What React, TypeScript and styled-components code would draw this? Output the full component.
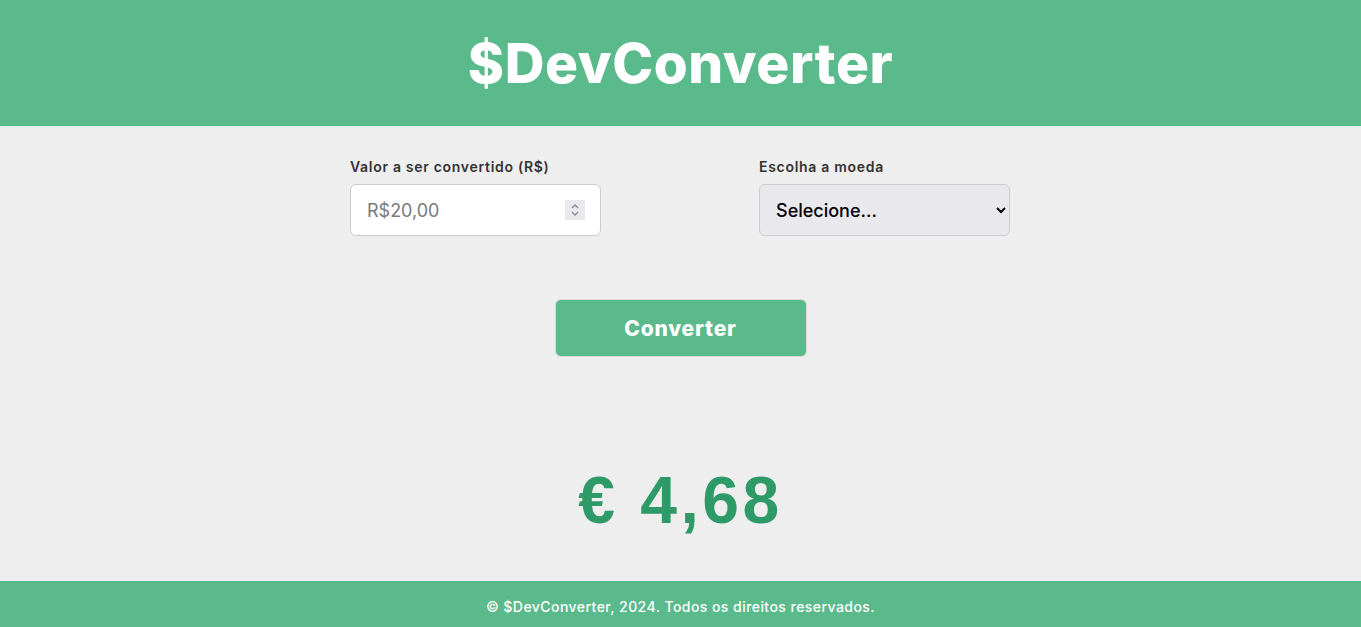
import React from "react";
import styled, { createGlobalStyle } from "styled-components";

const Global = createGlobalStyle`
  html, body { margin: 0; padding: 0; }
  body { background: #eeeeee; font-family: "Inter", "Noto Sans", sans-serif; }
  * { box-sizing: border-box; }
`;

const Page = styled.div`
  min-height: 100vh;
  display: flex;
  flex-direction: column;
`;

const Header = styled.header`
  height: 126px;
  background: #5bba8c;
  display: flex;
  align-items: center;
  justify-content: center;
`;

const Title = styled.h1`
  margin: 0;
  color: #ffffff;
  font-family: "Inter", sans-serif;
  font-weight: 800;
  font-size: 55px;
  letter-spacing: 0.6px;
`;

const Main = styled.main`
  flex: 1;
  display: flex;
  flex-direction: column;
  align-items: center;
  padding-top: 32px;
`;

const FormRow = styled.div`
  display: flex;
  gap: 158px;
  margin-right: 1px;
`;

const Field = styled.div`
  display: flex;
  flex-direction: column;
  width: 251px;
`;

const Label = styled.label`
  font-size: 14px;
  font-weight: 600;
  color: #333333;
  margin-bottom: 8px;
  line-height: 18px;
  letter-spacing: 0.7px;
`;

const Control = styled.div`
  position: relative;
  height: 52px;
`;

const TextInput = styled.input`
  width: 100%;
  height: 52px;
  border: 1px solid #cccccc;
  border-radius: 6px;
  background: #ffffff;
  padding: 0 16px;
  font-family: "Inter", sans-serif;
  font-size: 18px;
  color: #333;
  outline: none;
  &::placeholder { color: #7a7a7a; }
`;

const Spinner = styled.div`
  position: absolute;
  right: 16px;
  top: 16px;
  width: 20px;
  height: 20px;
  background: #e9e9ed;
  display: flex;
  align-items: center;
  justify-content: center;
`;

const Select = styled.select`
  width: 100%;
  height: 52px;
  border: 1px solid #cccccc;
  border-radius: 6px;
  background: #e9e9ed;
  padding: 0 12px;
  font-family: "Inter", sans-serif;
  font-size: 18px;
  font-weight: 500;
  color: #000;
`;

const Button = styled.button`
  margin-top: 63px;
  width: 252px;
  height: 58px;
  background: #5bba8c;
  border: 1px solid #d8d8d8;
  border-radius: 6px;
  color: #ffffff;
  font-family: "Inter", sans-serif;
  font-weight: 800;
  font-size: 21px;
  letter-spacing: 0.8px;
  cursor: pointer;
`;

const Result = styled.div`
  margin-top: 110px;
  font-family: "Liberation Sans", Arial, sans-serif;
  font-weight: 700;
  font-size: 66px;
  letter-spacing: 3.5px;
  color: #2e9a68;
  line-height: 1;
`;

const Footer = styled.footer`
  height: 46px;
  background: #5bba8c;
  display: flex;
  align-items: center;
  justify-content: center;
  color: #ffffff;
  font-size: 14px;
  font-weight: 500;
  letter-spacing: 0.45px;
  padding-top: 4px;
`;

export default function App() {
  return (
    <Page>
      <Global />
      <Header>
        <Title>$DevConverter</Title>
      </Header>
      <Main>
        <FormRow>
          <Field>
            <Label>Valor a ser convertido (R$)</Label>
            <Control>
              <TextInput type="text" placeholder="R$20,00" />
              <Spinner>
                <svg width="10" height="16" viewBox="0 0 10 16" fill="none" stroke="#8a8a8a" strokeWidth="1.3">
                  <path d="M2 6 L5 3 L8 6" />
                  <path d="M2 10 L5 13 L8 10" />
                </svg>
              </Spinner>
            </Control>
          </Field>
          <Field>
            <Label>Escolha a moeda</Label>
            <Control>
              <Select defaultValue="">
                <option value="">Selecione...</option>
                <option value="EUR">Euro</option>
                <option value="USD">Dólar</option>
              </Select>
            </Control>
          </Field>
        </FormRow>
        <Button>Converter</Button>
        <Result>€ 4,68</Result>
      </Main>
      <Footer>© $DevConverter, 2024. Todos os direitos reservados.</Footer>
    </Page>
  );
}
